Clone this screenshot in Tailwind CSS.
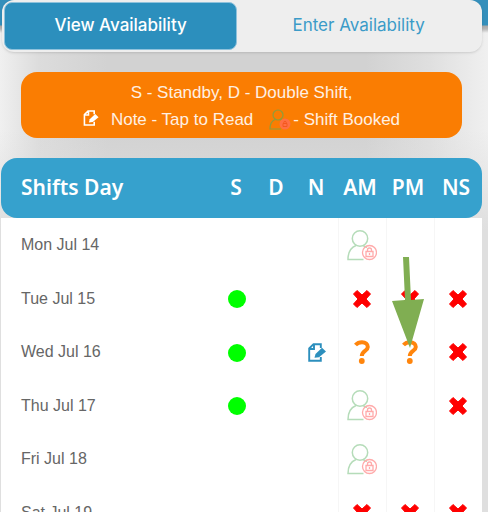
<!DOCTYPE html>
<html lang="en">
<head>
    <meta charset="UTF-8">
    <meta name="viewport" content="width=device-width, initial-scale=1.0">
    <title>Shift Availability</title>
    <script src="https://cdn.jsdelivr.net/npm/@tailwindcss/browser@4"></script>
</head>
<body class="h-screen overflow-hidden bg-[linear-gradient(#348fbb,#348fbb_25px,#a9a9a9_26px,#b8b8b8_29px,transparent_33px),linear-gradient(transparent_130px,#dfdfdf_230px),linear-gradient(90deg,#f0f0f0,#dcdcdc_8%,#d2d2d2_22%,#d2d2d2_75%,#dfdfdf_88%,#f0f0f0)] font-['Liberation_Sans',Arial,sans-serif]">

    <!-- Shared icons -->
    <svg class="hidden" aria-hidden="true">
        <symbol id="booked" viewBox="0 0 30 31">
            <g fill="none" stroke="#b5dcb9" stroke-width="1.5">
                <circle cx="13" cy="8.500" r="7.700"/>
                <path d="M9 15.500C4 17.500 1 22 1 29.500H16.500M16 15.500L20 17.500"/>
            </g>
            <g fill="none" stroke="#ffaaaa" stroke-width="1.300">
                <circle cx="22.500" cy="22.500" r="7"/>
                <path d="M19 21.500h7v5h-7zM20.500 21.500v-1.500a2 2 0 0 1 4 0v1.500M22.500 23v2"/>
            </g>
        </symbol>
        <symbol id="booked-dark" viewBox="0 0 22 21">
            <g fill="none" stroke="#8d9d3c" stroke-width="1.200">
                <circle cx="9" cy="6" r="5"/>
                <path d="M6 10.500C2.500 12 1 15 1 20H12M11.500 10.500L14 12"/>
            </g>
            <circle cx="16" cy="15" r="5.500" fill="#ff7043"/>
            <path d="M14 14.500h4v3h-4zM14.800 14.500v-1a1.200 1.200 0 0 1 2.400 0v1" fill="none" stroke="#f4581f"/>
        </symbol>
        <symbol id="note" viewBox="0 0 18 19">
            <path d="M12.800 5V1.200H5.500L1.200 5.500V17.800H12.800V14M1.200 6H6V1.200" fill="none" stroke="currentColor" stroke-width="1.900"/>
            <path d="M6.500 14.800L7.500 11L14 4.800L18 8.500L11 14.200Z" fill="currentColor"/>
        </symbol>
        <symbol id="cross" viewBox="0 0 18 18">
            <path d="M4 0.500L9 5L14 0.500L17.500 4L13 9L17.500 14L14 17.500L9 13L4 17.500L0.500 14L5 9L0.500 4Z" fill="#ff0000" stroke="#ff0000" stroke-width="1" stroke-linejoin="round"/>
        </symbol>
        <symbol id="question" viewBox="0 0 16 24">
            <path d="M1.500 5C3.500 2.800 5.500 2.200 8 2.200C11.500 2.200 13.800 4 13.800 7C13.800 11 7.800 11 7.800 16" fill="none" stroke="#ff850c" stroke-width="4"/>
            <circle cx="7.800" cy="21" r="2.900" fill="#ff850c"/>
        </symbol>
    </svg>

    <!-- Tabs -->
    <nav class="mr-[6px] ml-[2px] flex rounded-xl bg-[#eeeeee] p-[2px] font-[Inter,sans-serif] text-[17px] shadow-sm">
        <button class="h-12 w-[49%] rounded-lg border border-[#8fc2dc] bg-[#2c8fbd] font-medium text-white">View Availability</button>
        <button class="h-12 flex-1 rounded-lg text-[#3b9bc8]">Enter Availability</button>
    </nav>

    <!-- Legend -->
    <div class="mt-5 mr-[26px] mb-5 ml-[21px] h-[66px] rounded-2xl bg-[#fa7d02] pt-[7px] text-center text-[17px] leading-[27px] text-[#fff0e2]">
        <p>S - Standby, D - Double Shift,</p>
        <p class="flex items-center justify-center">
            <svg class="mr-3 mb-1 h-4 w-4 text-white"><use href="#note"/></svg>
            Note - Tap to Read
            <svg class="mr-[2px] ml-4 h-[21px] w-[22px]"><use href="#booked-dark"/></svg>
            - Shift Booked
        </p>
    </div>

    <!-- Shifts -->
    <div class="relative mr-[6px] ml-px">
        <table class="w-full table-fixed border-separate border-spacing-0 text-center">
            <colgroup>
                <col>
                <col class="w-10">
                <col class="w-10">
                <col class="w-10">
                <col class="w-12">
                <col class="w-12">
                <col class="w-12">
            </colgroup>
            <thead class="font-['Noto_Sans',sans-serif] text-[21px] text-white">
                <tr class="h-[60px] *:bg-[#36a1cd] *:p-0 *:font-semibold">
                    <th class="rounded-l-2xl text-left"><span class="pl-5">Shifts Day</span></th>
                    <th><span class="pr-1">S</span></th>
                    <th><span class="pr-1">D</span></th>
                    <th><span class="pr-1">N</span></th>
                    <th><span class="pr-1">AM</span></th>
                    <th><span class="pr-1">PM</span></th>
                    <th class="rounded-r-2xl"><span class="pr-1">NS</span></th>
                </tr>
            </thead>
            <tbody id="shifts" class="bg-white text-base text-[#666666]"></tbody>
        </table>

        <!-- Pointer arrow -->
        <svg class="absolute top-[99px] right-[58px] h-[91px] w-8" viewBox="0 0 32 91">
            <path d="M11 0H17L19 43L32 42L18 91L0 44L13 43Z" fill="#80ae52"/>
        </svg>
    </div>

    <script>
        const icons = {
            dot: '<span class="inline-block size-[18px] rounded-full bg-[#00ff00] align-middle"></span>',
            note: '<svg class="mx-auto h-[19px] w-[18px] text-[#2c8fbd]"><use href="#note"/></svg>',
            booked: '<svg class="mx-auto h-[31px] w-[30px]"><use href="#booked"/></svg>',
            x: '<svg class="mx-auto size-[18px]"><use href="#cross"/></svg>',
            q: '<svg class="mx-auto h-6 w-4"><use href="#question"/></svg>'
        };

        // day, S, D, N, AM, PM, NS
        const rows = [
            ["Mon Jul 14", "", "", "", "booked", "", ""],
            ["Tue Jul 15", "dot", "", "", "x", "x", "x"],
            ["Wed Jul 16", "dot", "", "note", "q", "q", "x"],
            ["Thu Jul 17", "dot", "", "", "booked", "", "x"],
            ["Fri Jul 18", "", "", "", "booked", "", ""],
            ["Sat Jul 19", "", "", "", "x", "x", "x"]
        ];

        document.getElementById("shifts").innerHTML = rows.map(([day, ...cells]) => `
            <tr class="h-[53px] odd:h-[54px]">
                <td class="p-0 pl-5 text-left">${day}</td>
                ${cells.map((c, i) => `<td class="${i > 2 ? "border-l border-[#f6f6f6] p-0 pr-[2px]" : "p-0 pr-[2px]"}">${icons[c] || ""}</td>`).join("")}
            </tr>`).join("");
    </script>

</body>
</html>
